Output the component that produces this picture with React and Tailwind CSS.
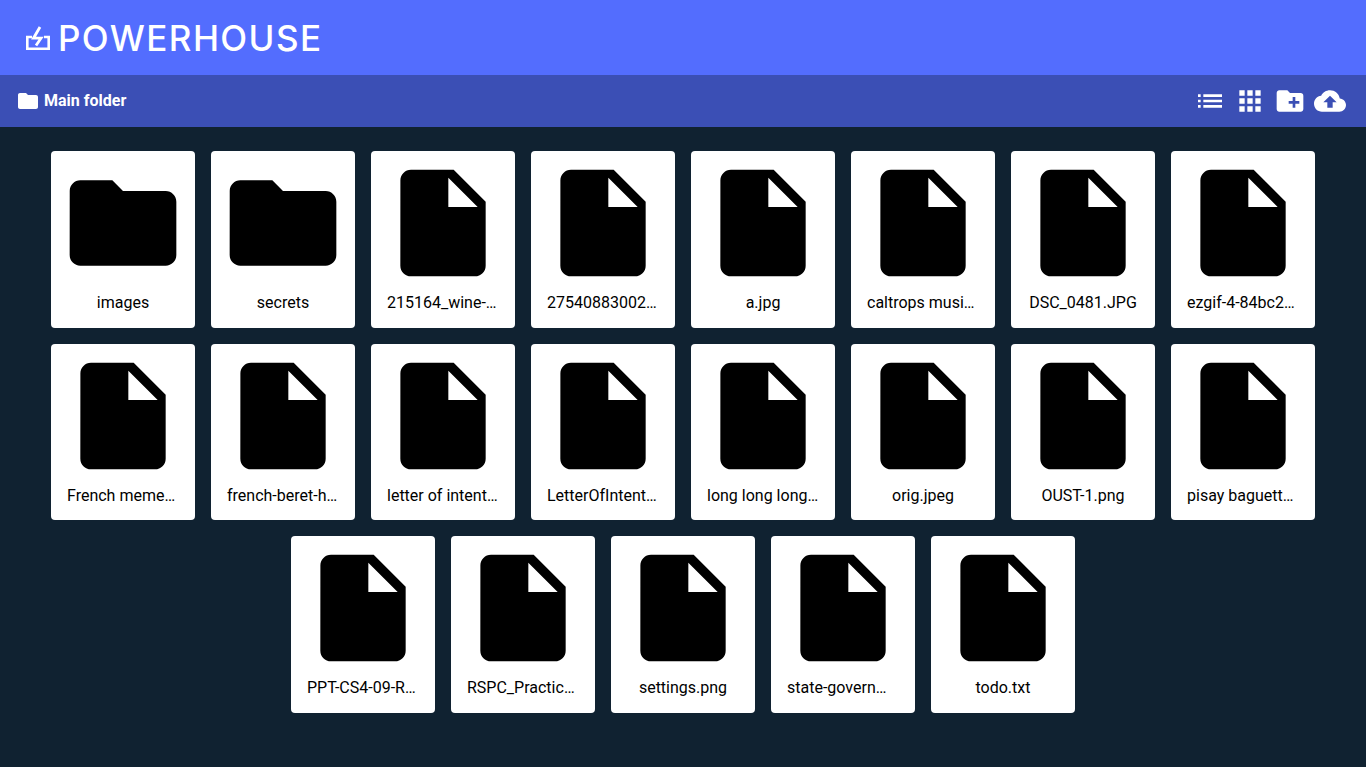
const folder = "M10 4H4c-1.1 0-1.99.9-1.99 2L2 18c0 1.1.9 2 2 2h16c1.1 0 2-.9 2-2V8c0-1.1-.9-2-2-2h-8l-2-2z";
const file = "M6 2c-1.1 0-1.99.9-1.99 2L4 20c0 1.1.89 2 1.99 2H18c1.1 0 2-.9 2-2V8l-6-6H6zm7 7V3.5L18.5 9H13z";

const items = [
  ["images", "folder"], ["secrets", "folder"], ["215164_wine-glasses.jpg"], ["27540883002_large_image.jpg"], ["a.jpg"],
  ["caltrops music video.mp4"], ["DSC_0481.JPG"], ["ezgif-4-84bc2f1a9d.gif"], ["French meme collection.png"],
  ["french-beret-hat-photo.jpg"], ["letter of intent final.docx"], ["LetterOfIntent_2019.pdf"],
  ["long long long long name.txt"], ["orig.jpeg"], ["OUST-1.png"], ["pisay baguette club.png"],
  ["PPT-CS4-09-Recursion.pptx"], ["RSPC_Practice_Sheet.pdf"], ["settings.png"], ["state-government-notes.pdf"], ["todo.txt"],
];

function Icon({ d, className }) {
  return (
    <svg viewBox="0 0 24 24" fill="currentColor" className={className}>
      <path d={d} />
    </svg>
  );
}

function Card({ name, type }) {
  return (
    <div className="w-[144px] h-[176.5px] bg-white rounded-[4px] flex flex-col items-center pt-2 text-black">
      <Icon d={type === "folder" ? folder : file} className="w-[128px] h-[128px] shrink-0" />
      <div className="w-full px-4 mt-[4px] text-center text-[16px] leading-[24px] truncate">{name}</div>
    </div>
  );
}

export default function App() {
  return (
    <div className="min-h-[767px] bg-[#102231] font-['Roboto',sans-serif] overflow-hidden">
      <header className="h-[75px] bg-[#536dfe] flex items-center pl-[26px] text-white">
        <svg viewBox="0 0 24 24" className="w-[24px] h-[24px] mt-[1px] shrink-0" fill="none" stroke="currentColor" strokeWidth="2.6">
          <path d="M6 11H1.3V22.7H22.7V11H18" />
          <path d="M14 1 7.5 12.2H15L10 19.5" strokeWidth="2.8" />
        </svg>
        <span className="ml-[8px] font-['Inter',sans-serif] font-medium text-[35px] leading-none tracking-[1.4px] mt-[1px]">POWERHOUSE</span>
      </header>
      <nav className="h-[52px] bg-[#3b4fb5] flex items-center justify-between pl-[16px] pr-[20px] text-white">
        <div className="flex items-center">
          <Icon d={folder} className="w-[24px] h-[24px]" />
          <span className="ml-[4px] font-bold text-[16px]">Main folder</span>
        </div>
        <div className="flex items-center gap-[8px]">
          <Icon d="M3 13h2v-2H3v2zm0 4h2v-2H3v2zm0-8h2V7H3v2zm4 4h14v-2H7v2zm0 4h14v-2H7v2zM7 7v2h14V7H7z" className="w-[32px] h-[32px]" />
          <Icon d="M4 8h4V4H4v4zm6 12h4v-4h-4v4zm-6 0h4v-4H4v4zm0-6h4v-4H4v4zm6 0h4v-4h-4v4zm6-10v4h4V4h-4zm-6 4h4V4h-4v4zm6 6h4v-4h-4v4zm0 6h4v-4h-4v4z" className="w-[32px] h-[32px]" />
          <Icon d="M20 6h-8l-2-2H4c-1.11 0-1.99.89-1.99 2L2 18c0 1.11.89 2 2 2h16c1.11 0 2-.89 2-2V8c0-1.11-.89-2-2-2zm-1 8h-3v3h-2v-3h-3v-2h3V9h2v3h3v2z" className="w-[32px] h-[32px]" />
          <Icon d="M19.35 10.04C18.67 6.59 15.64 4 12 4 9.11 4 6.6 5.64 5.35 8.04 2.34 8.36 0 10.91 0 14c0 3.31 2.69 6 6 6h13c2.76 0 5-2.24 5-5 0-2.64-2.05-4.78-4.65-4.96zM14 13v4h-4v-4H7l5-5 5 5h-3z" className="w-[32px] h-[32px]" />
        </div>
      </nav>
      <main className="flex flex-wrap justify-center gap-4 pt-[24px]">
        {items.map(([n, t]) => <Card key={n} name={n} type={t} />)}
      </main>
    </div>
  );
}
